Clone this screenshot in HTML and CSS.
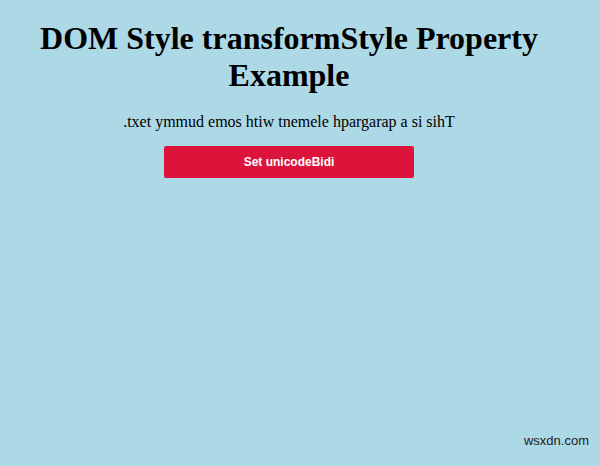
FILE: index.html
```html
<!DOCTYPE html>
<html>
<head>
<meta charset="utf-8">
<link rel="stylesheet" href="styles.css">
</head>
<body>
<div class="page">
  <h1 class="title">DOM Style transformStyle Property Example</h1>
  <p class="demo">This is a paragraph element with some dummy text.</p>
  <button class="btn">Set unicodeBidi</button>
</div>
<div class="mark">wsxdn.com</div>
</body>
</html>
```
FILE: styles.css
```css
html, body {
  margin: 0;
  height: 100%;
}
body {
  background: #add8e6;
  font-family: "Liberation Serif", "Times New Roman", serif;
  padding: 8px;
  box-sizing: border-box;
  position: relative;
}
.page {
  width: 562px;
  display: flex;
  flex-direction: column;
  align-items: center;
  text-align: center;
}
.title {
  font-size: 32px;
  font-weight: bold;
  margin: 12px 0 0;
  line-height: 37px;
  color: #000;
}
.demo {
  font-size: 16px;
  direction: rtl;
  unicode-bidi: bidi-override;
  margin: 19px 0 0;
}
.btn {
  margin-top: 15px;
  width: 250px;
  height: 32px;
  background: #dc143c;
  color: #fff;
  border: none;
  border-radius: 2px;
  font-family: "Liberation Sans", Arial, sans-serif;
  font-weight: bold;
  font-size: 12px;
}
.mark {
  position: absolute;
  right: 11px;
  bottom: 18px;
  font-family: "Liberation Sans", Arial, sans-serif;
  font-size: 13px;
  color: #222;
}
```
